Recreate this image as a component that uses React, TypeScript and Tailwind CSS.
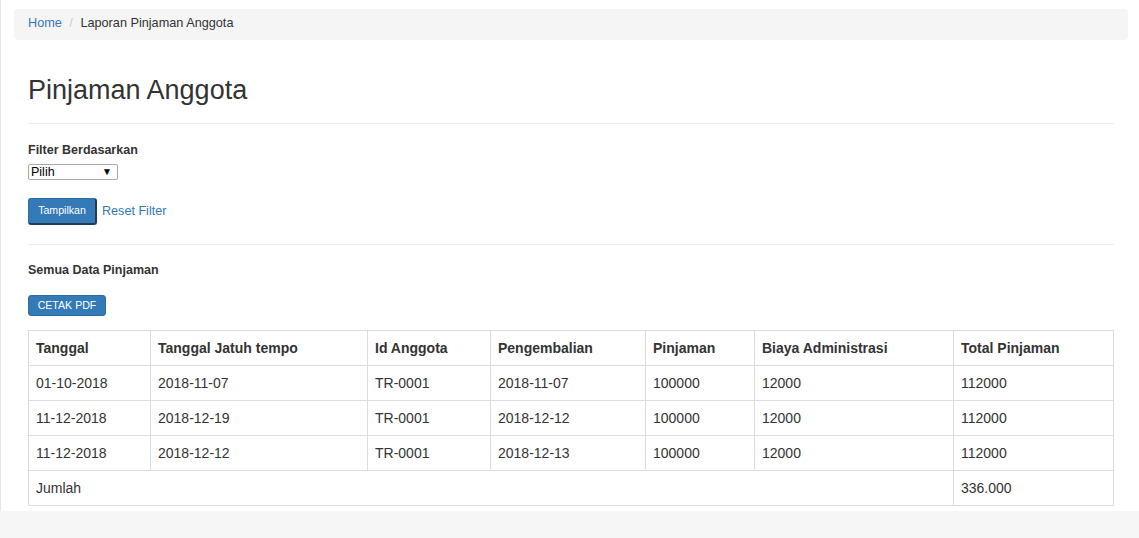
import React from "react";

const rows = [
  ["01-10-2018", "2018-11-07", "TR-0001", "2018-11-07", "100000", "12000", "112000"],
  ["11-12-2018", "2018-12-19", "TR-0001", "2018-12-12", "100000", "12000", "112000"],
  ["11-12-2018", "2018-12-12", "TR-0001", "2018-12-13", "100000", "12000", "112000"],
];

const headers = [
  "Tanggal",
  "Tanggal Jatuh tempo",
  "Id Anggota",
  "Pengembalian",
  "Pinjaman",
  "Biaya Administrasi",
  "Total Pinjaman",
];

const widths = [122, 217, 123, 155, 109, 199, 160];

export default function App() {
  return (
    <div
      className="w-full h-[538px] bg-[#f6f6f6] text-[#333]"
      style={{ fontFamily: '"Liberation Sans", Arial, sans-serif' }}
    >
      <div className="h-[511px] bg-white border-l border-[#e8e8e8] pt-[9px] pl-[13px] pr-[11px]">
        {/* Breadcrumb */}
        <div className="h-[31px] rounded-[4px] bg-[#f5f5f5] flex items-center px-[14px] pb-[1px] text-[12.7px]">
          <span className="text-[#337ab7]">Home</span>
          <span className="px-[7.5px] text-[#ccc]">/</span>
          <span className="text-[#333]">Laporan Pinjaman Anggota</span>
        </div>

        <div className="px-[14px]">
          <h1 className="mt-[35px] text-[27px] leading-[30px] font-normal text-[#333]">
            Pinjaman Anggota
          </h1>
          <div className="mt-[18px] border-t border-[#eee]" />

          <div className="mt-[17px] text-[12.5px] leading-[18px] font-bold">Filter Berdasarkan</div>
          <div className="mt-[5px] w-[90px] h-[16px] border border-[#a9a9a9] rounded-[2px] flex items-center justify-between pl-[2px] pr-[5px] bg-white">
            <span className="text-[12.5px] leading-[14px] text-black">Pilih</span>
            <span className="text-[10px] leading-[10px] text-black">▼</span>
          </div>

          <div className="mt-[18px] flex items-center">
            <button className="h-[27px] w-[69px] bg-[#337ab7] rounded-[3px] border border-[#2e6da4] border-r-2 border-b-2 border-r-[#1f3d5a] border-b-[#1f3d5a] text-white text-[10.6px] flex items-center justify-center">
              Tampilkan
            </button>
            <span className="ml-[5px] text-[12.6px] text-[#337ab7]">Reset Filter</span>
          </div>

          <div className="mt-[19px] border-t border-[#eee]" />

          <div className="mt-[16px] text-[12.5px] leading-[18px] font-bold">Semua Data Pinjaman</div>

          <button className="mt-[16px] h-[21px] w-[78px] bg-[#337ab7] rounded-[3px] border border-[#2e6da4] text-white text-[10.6px] flex items-center justify-center">
            CETAK PDF
          </button>

          <table className="mt-[14px] w-[1085px] table-fixed border-collapse text-[14px]">
            <colgroup>
              {widths.map((w, i) => (
                <col key={i} style={{ width: w }} />
              ))}
            </colgroup>
            <thead>
              <tr className="h-[35px]">
                {headers.map((h) => (
                  <th key={h} className="border border-[#ddd] text-left font-bold pl-[7px] pr-[8px] text-[#333]">
                    {h}
                  </th>
                ))}
              </tr>
            </thead>
            <tbody>
              {rows.map((r, i) => (
                <tr key={i} className="h-[35px]">
                  {r.map((c, j) => (
                    <td key={j} className="border border-[#ddd] pl-[7px] pr-[8px] text-[#333]">
                      {c}
                    </td>
                  ))}
                </tr>
              ))}
              <tr className="h-[35px]">
                <td colSpan={6} className="border border-[#ddd] pl-[7px] pr-[8px] text-[#333]">
                  Jumlah
                </td>
                <td className="border border-[#ddd] pl-[7px] pr-[8px] text-[#333]">336.000</td>
              </tr>
            </tbody>
          </table>
        </div>
      </div>
    </div>
  );
}
